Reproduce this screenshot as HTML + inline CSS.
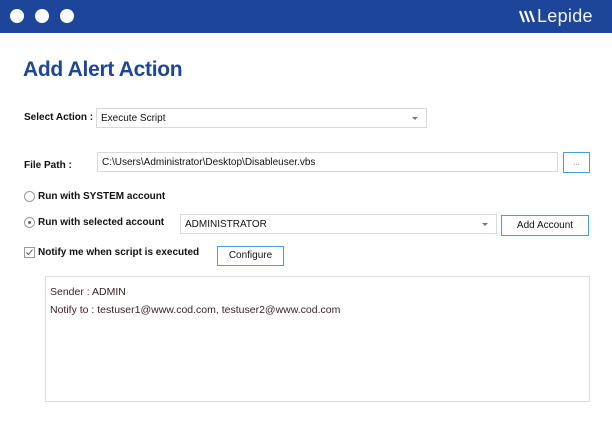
<!DOCTYPE html>
<html><head><meta charset="utf-8"><style>
*{margin:0;padding:0;box-sizing:border-box}
body{width:612px;height:430px;background:#fff;position:relative;overflow:hidden;font-family:"Liberation Sans",sans-serif;color:#222}
.hdr{position:absolute;left:0;top:0;width:612px;height:33px;background:#1d4599}
.dot{position:absolute;top:9px;width:14px;height:14px;border-radius:50%;background:#fff}
.logo{position:absolute;left:537px;top:6px;color:#f0f4ff;font-size:18px;letter-spacing:0.3px;font-weight:300}
h1{position:absolute;left:23px;top:58px;font-size:21px;font-weight:bold;color:#1f4596;letter-spacing:-0.3px}
.lbl{position:absolute;font-size:10px;font-weight:bold;color:#111}
.box{position:absolute;border:1px solid #d9d9d9;background:#fff;font-size:10px;padding:4px 0 0 4px;color:#111}
.arrow{position:absolute;right:8px;top:8px;width:0;height:0;border-left:3px solid transparent;border-right:3px solid transparent;border-top:3px solid #777}
.btn{position:absolute;border:1px solid #4a9ce0;background:#fff;font-size:10px;text-align:center;color:#111}
.radio{position:absolute;width:11px;height:11px;border:1px solid #999;border-radius:50%;background:#fff}
.chk{position:absolute;width:11px;height:11px;border:1px solid #999;background:#fff}
.ta{position:absolute;left:45px;top:276px;width:545px;height:126px;border:1px solid #ddd;font-size:10.5px;color:#3a1f1f}
</style></head><body>
<div class="hdr">
<div class="dot" style="left:10px"></div><div class="dot" style="left:35px"></div><div class="dot" style="left:60px"></div>
<svg style="position:absolute;left:519px;top:10px" width="16" height="13" viewBox="0 0 16 13"><g stroke="#fff" stroke-width="2.2"><path d="M1 1l4 11M6 1l4 11M11 1l4 11"/></g></svg>
<div class="logo">Lepide</div>
</div>
<h1>Add Alert Action</h1>
<div class="lbl" style="left:24px;top:112px">Select Action :</div>
<div class="box" style="left:96px;top:108px;width:331px;height:20px">Execute Script<div class="arrow"></div></div>
<div class="lbl" style="left:24px;top:160px">File Path :</div>
<div class="box" style="left:97px;top:152px;width:461px;height:20px">C:\Users\Administrator\Desktop\Disableuser.vbs</div>
<div class="btn" style="left:563px;top:152px;width:27px;height:21px;line-height:19px;color:#888;font-size:8px">...</div>
<div class="radio" style="left:24px;top:191px"></div>
<div class="lbl" style="left:38px;top:191px">Run with SYSTEM account</div>
<div class="radio" style="left:24px;top:217px"><div style="position:absolute;left:3px;top:3px;width:3px;height:3px;border-radius:50%;background:#666"></div></div>
<div class="lbl" style="left:38px;top:217px">Run with selected account</div>
<div class="box" style="left:180px;top:214px;width:317px;height:20px">ADMINISTRATOR<div class="arrow"></div></div>
<div class="btn" style="left:501px;top:215px;width:88px;height:21px;line-height:19px">Add Account</div>
<div class="chk" style="left:24px;top:247px"><svg width="9" height="9" style="position:absolute;left:0;top:0"><path d="M1.5 4.5l2 2 4-5" stroke="#555" fill="none" stroke-width="1"/></svg></div>
<div class="lbl" style="left:38px;top:247px">Notify me when script is executed</div>
<div class="btn" style="left:217px;top:246px;width:67px;height:20px;line-height:18px">Configure</div>
<div class="ta"><div style="position:absolute;left:4px;top:9px">Sender : ADMIN</div><div style="position:absolute;left:4px;top:27px">Notify to : testuser1@www.cod.com, testuser2@www.cod.com</div></div>
</body></html>
